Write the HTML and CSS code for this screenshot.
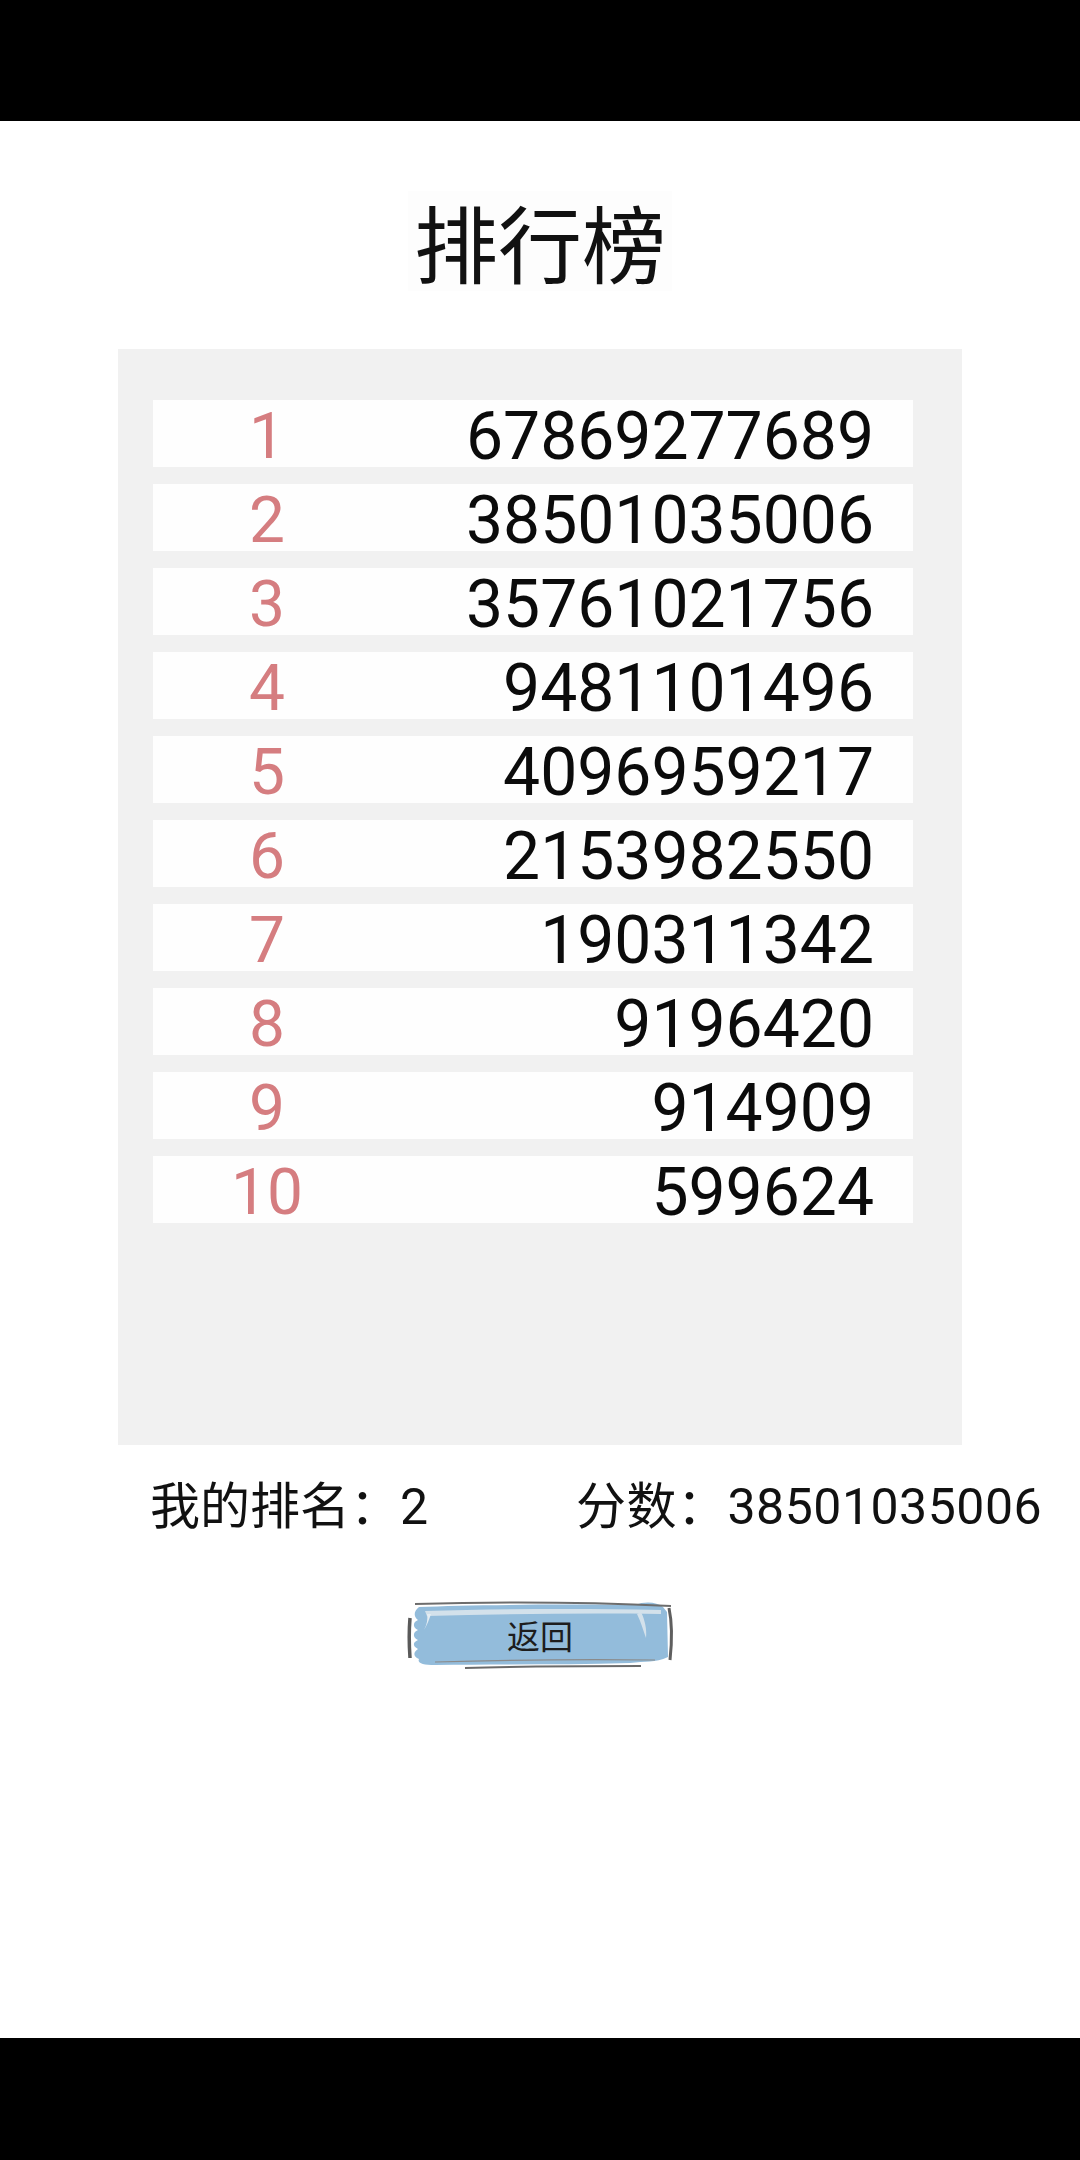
FILE: index.html
```html
<!DOCTYPE html>
<html lang="zh-CN">
<head>
    <meta charset="UTF-8">
    <meta name="viewport" content="width=device-width, initial-scale=1.0">
    <title>排行榜</title>
    <link rel="stylesheet" href="styles.css">
</head>
<body>
    <div class="bar"></div>

    <div class="screen">
        <h1 class="title">排行榜</h1>

        <div class="board">
            <div class="row"><span class="rank">1</span><span class="score">67869277689</span></div>
            <div class="row"><span class="rank">2</span><span class="score">38501035006</span></div>
            <div class="row"><span class="rank">3</span><span class="score">35761021756</span></div>
            <div class="row"><span class="rank">4</span><span class="score">9481101496</span></div>
            <div class="row"><span class="rank">5</span><span class="score">4096959217</span></div>
            <div class="row"><span class="rank">6</span><span class="score">2153982550</span></div>
            <div class="row"><span class="rank">7</span><span class="score">190311342</span></div>
            <div class="row"><span class="rank">8</span><span class="score">9196420</span></div>
            <div class="row"><span class="rank">9</span><span class="score">914909</span></div>
            <div class="row"><span class="rank">10</span><span class="score">599624</span></div>
        </div>

        <div class="mine">
            <span class="my-rank">我的排名：2</span>
            <span class="my-score">分数：38501035006</span>
        </div>

        <button class="back">
            <svg class="brush" viewBox="0 0 270 70" preserveAspectRatio="none">
                <!-- blue paint -->
                <path d="M14 7 C60 5 150 4 230 5 C240 1 252 2 258 7 L262 12 L263 57 C250 63 240 61 225 63 C160 65 90 64 30 65 C18 65 12 63 14 59 C8 57 8 52 13 49 C7 46 8 42 13 40 C7 37 8 32 13 30 C7 27 8 22 13 20 C8 16 9 11 14 7 Z" fill="#93bcdb"/>
                <!-- light streaks -->
                <path d="M20 11 C90 9 170 8 256 10 L256 14 C180 13 100 14 22 16 Z" fill="#d3e1eb"/>
                <path d="M236 12 C240 20 242 30 241 38 C238 30 236 22 232 14 Z" fill="#d3e1eb"/>
                <path d="M26 14 C24 20 22 25 19 30 C22 24 23 19 22 14 Z" fill="#e4edf3"/>
                <!-- dark strokes -->
                <path d="M10 4 C80 2 180 2 266 6" stroke="#6d6d6d" stroke-width="2" fill="none"/>
                <path d="M5 18 C4 30 4 44 5 58" stroke="#5a5a5a" stroke-width="3.5" fill="none"/>
                <path d="M264 8 C267 22 267 42 265 60" stroke="#5f5f5f" stroke-width="3" fill="none"/>
                <path d="M60 68 C120 66 180 66 236 66" stroke="#6a6a6a" stroke-width="2" fill="none"/>
                <path d="M30 62 C100 60 170 59 250 60" stroke="#8a8a8a" stroke-width="1.2" fill="none"/>
            </svg>
            <span class="back-label">返回</span>
        </button>
    </div>

    <div class="bar"></div>
</body>
</html>
```

FILE: styles.css
```css
* {
    box-sizing: border-box;
}

body {
    margin: 0;
    background: #fff;
    font-family: Roboto, "Noto Sans CJK SC", sans-serif;
    color: #111;
}

.bar {
    height: 121px;
    background: #000;
}

.bar:last-child {
    height: 122px;
}

.screen {
    height: 1917px;
    display: flex;
    flex-direction: column;
    align-items: center;
    padding-top: 70px;
}

.title {
    margin: 0;
    font-family: "Noto Sans CJK SC", sans-serif;
    font-weight: 400;
    font-size: 84px;
    line-height: 100px;
    height: 100px;
    padding: 0 6px;
    background: #fdfdfd;
}

.board {
    margin-top: 58px;
    width: 844px;
    height: 1096px;
    background: #f1f1f1;
    padding: 51px 49px 0 35px;
    display: flex;
    flex-direction: column;
    gap: 17px;
}

.row {
    height: 67px;
    background: #fefefe;
    display: grid;
    grid-template-columns: 228px 1fr;
    align-items: center;
    padding-right: 39px;
    font-size: 66px;
    line-height: 67px;
    padding-top: 3px;
}

.rank {
    text-align: center;
    color: #d57d80;
    font-size: 64px;
}

.score {
    text-align: right;
    color: #0b0b0b;
}

.mine {
    align-self: stretch;
    margin-top: 32px;
    padding-left: 150px;
    display: flex;
    font-size: 50px;
    line-height: 60px;
}

.my-rank {
    width: 426px;
}

.my-score {
    letter-spacing: 0.5px;
}

.back {
    position: relative;
    margin-top: 63px;
    width: 270px;
    height: 70px;
    border: none;
    padding: 0;
    background: transparent;
    font-family: "Noto Sans CJK SC", sans-serif;
    cursor: pointer;
}

.brush {
    position: absolute;
    left: 0;
    top: 0;
    width: 100%;
    height: 100%;
}

.back-label {
    position: relative;
    font-size: 33px;
    line-height: 70px;
    color: #1d1d1d;
}
```
